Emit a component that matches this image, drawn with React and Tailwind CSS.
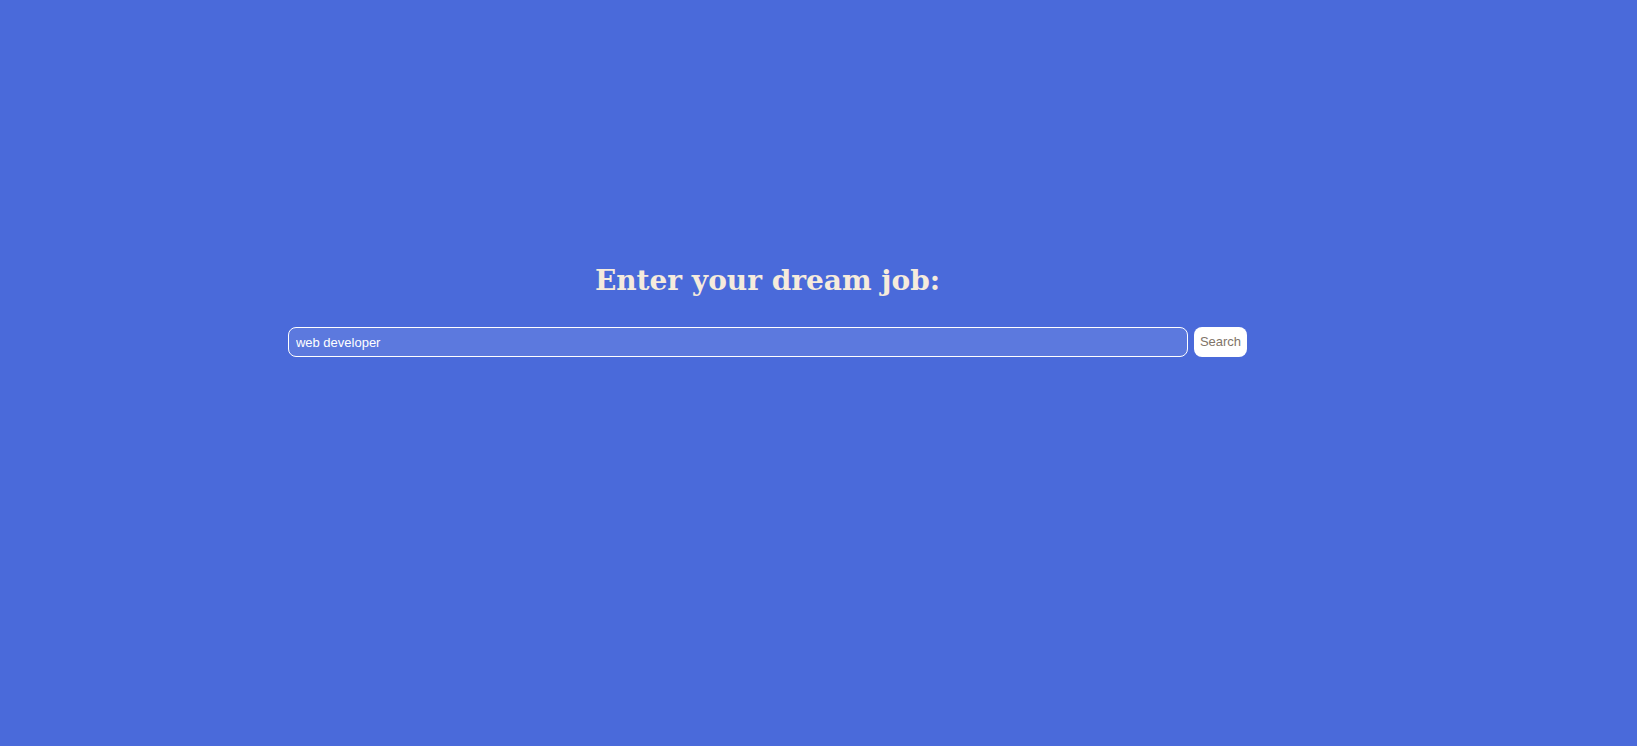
import React, { useState } from 'react';

function App() {
    // Término de búsqueda
    const [query, setQuery] = useState('web developer');

    return (
        <div className="min-h-screen w-full bg-[#4a6ada] flex flex-col items-center pr-[102px] pt-[261px]">
            {/* Título */}
            <h1 className="font-['DejaVu_Serif',Georgia,serif] font-bold text-[28px] leading-[39px] text-[#f5ebdc]">
                Enter your dream job:
            </h1>

            {/* Buscador */}
            <form className="mt-[27px] flex items-center gap-[6px]" onSubmit={(e) => e.preventDefault()}>
                <input
                    value={query}
                    onChange={(e) => setQuery(e.target.value)}
                    className="w-[900px] h-[30px] px-[7px] rounded-[8px] border border-white bg-white/10 text-white text-[13px] font-['Liberation_Sans',Arial,sans-serif] outline-none"
                />
                <button
                    type="submit"
                    className="h-[30px] px-[6px] rounded-[8px] bg-white text-[#7f7468] text-[13px] font-['Liberation_Sans',Arial,sans-serif]"
                >
                    Search
                </button>
            </form>
        </div>
    );
}

export default App;
